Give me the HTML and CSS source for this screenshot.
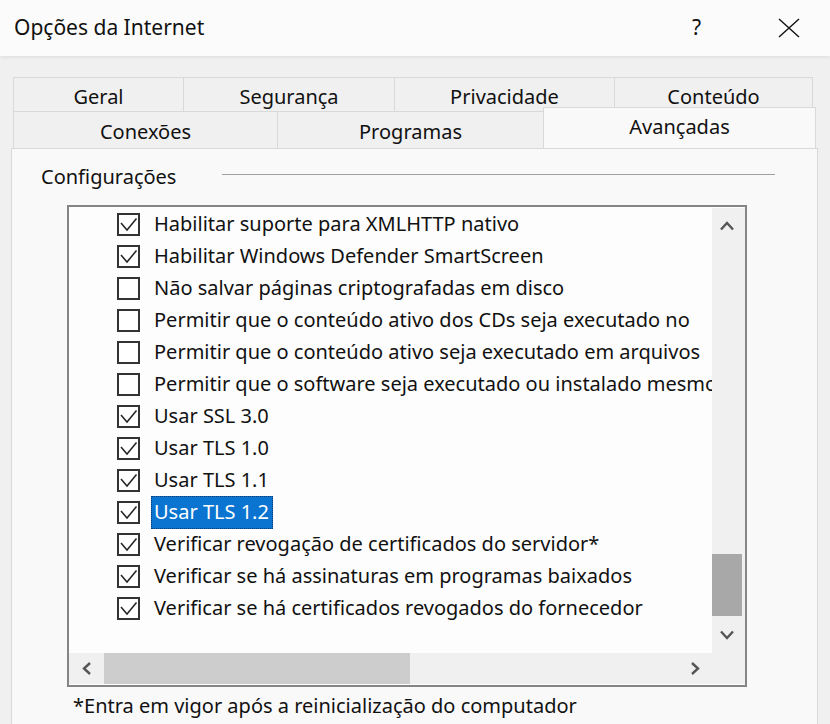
FILE: index.html
```html
<!DOCTYPE html>
<html lang="pt-BR">
<head>
<meta charset="utf-8">
<title>Opções da Internet</title>
<link rel="stylesheet" href="styles.css">
</head>
<body>
<div class="window">
  <div class="titlebar">
    <span class="title">Opções da Internet</span>
    <span class="help">?</span>
    <span class="close">
      <svg width="22" height="20" viewBox="0 0 22 20"><path d="M1 1 L21 19 M21 1 L1 19" stroke="#111" stroke-width="1.4" fill="none"/></svg>
    </span>
  </div>
  <div class="content">
    <div class="tabs">
      <div class="tabrow">
        <div class="tab w-geral">Geral</div>
        <div class="tab w-seg">Segurança</div>
        <div class="tab w-priv">Privacidade</div>
        <div class="tab w-cont">Conteúdo</div>
      </div>
      <div class="tabrow row2">
        <div class="tab w-con">Conexões</div>
        <div class="tab w-prog">Programas</div>
        <div class="tab active w-avan">Avançadas</div>
      </div>
    </div>
    <div class="panel">
      <div class="group-head">
        <span class="group-label">Configurações</span>
        <span class="rule"></span>
      </div>
      <div class="listbox">
        <div class="listmain">
          <div class="items">
            <div class="item"><span class="cb on"><svg viewBox="0 0 19 19"><path d="M2 8 L8 15 L17.5 3.5"/></svg></span><span class="label">Habilitar suporte para XMLHTTP nativo</span></div>
            <div class="item"><span class="cb on"><svg viewBox="0 0 19 19"><path d="M2 8 L8 15 L17.5 3.5"/></svg></span><span class="label">Habilitar Windows Defender SmartScreen</span></div>
            <div class="item"><span class="cb"></span><span class="label">Não salvar páginas criptografadas em disco</span></div>
            <div class="item"><span class="cb"></span><span class="label">Permitir que o conteúdo ativo dos CDs seja executado no</span></div>
            <div class="item"><span class="cb"></span><span class="label">Permitir que o conteúdo ativo seja executado em arquivos</span></div>
            <div class="item"><span class="cb"></span><span class="label">Permitir que o software seja executado ou instalado mesmo</span></div>
            <div class="item"><span class="cb on"><svg viewBox="0 0 19 19"><path d="M2 8 L8 15 L17.5 3.5"/></svg></span><span class="label">Usar SSL 3.0</span></div>
            <div class="item"><span class="cb on"><svg viewBox="0 0 19 19"><path d="M2 8 L8 15 L17.5 3.5"/></svg></span><span class="label">Usar TLS 1.0</span></div>
            <div class="item"><span class="cb on"><svg viewBox="0 0 19 19"><path d="M2 8 L8 15 L17.5 3.5"/></svg></span><span class="label">Usar TLS 1.1</span></div>
            <div class="item"><span class="cb on"><svg viewBox="0 0 19 19"><path d="M2 8 L8 15 L17.5 3.5"/></svg></span><span class="label selected">Usar TLS 1.2</span></div>
            <div class="item"><span class="cb on"><svg viewBox="0 0 19 19"><path d="M2 8 L8 15 L17.5 3.5"/></svg></span><span class="label">Verificar revogação de certificados do servidor*</span></div>
            <div class="item"><span class="cb on"><svg viewBox="0 0 19 19"><path d="M2 8 L8 15 L17.5 3.5"/></svg></span><span class="label">Verificar se há assinaturas em programas baixados</span></div>
            <div class="item"><span class="cb on"><svg viewBox="0 0 19 19"><path d="M2 8 L8 15 L17.5 3.5"/></svg></span><span class="label">Verificar se há certificados revogados do fornecedor</span></div>
          </div>
          <div class="vscroll">
            <div class="sbtn vbtn"><svg width="14" height="10" viewBox="0 0 14 10"><path d="M1 8.5 L7 2 L13 8.5"/></svg></div>
            <div class="vtrack"><div class="vthumb"></div></div>
            <div class="sbtn vbtn"><svg width="14" height="10" viewBox="0 0 14 10"><path d="M1 1.5 L7 8 L13 1.5"/></svg></div>
          </div>
        </div>
        <div class="hrow">
          <div class="hscroll">
            <div class="sbtn hbtn"><svg width="10" height="13" viewBox="0 0 10 13"><path d="M8 1 L2 6.5 L8 12"/></svg></div>
            <div class="htrack"><div class="hthumb"></div></div>
            <div class="sbtn hbtn"><svg width="10" height="13" viewBox="0 0 10 13"><path d="M2 1 L8 6.5 L2 12"/></svg></div>
          </div>
          <div class="corner"></div>
        </div>
      </div>
      <div class="note">*Entra em vigor após a reinicialização do computador</div>
    </div>
  </div>
</div>
</body>
</html>
```

FILE: styles.css
```css
html, body {
  margin: 0;
  padding: 0;
}
body {
  width: 830px;
  height: 724px;
  overflow: hidden;
  background: #f0f0f0;
  font-family: "Noto Sans", "Open Sans", sans-serif;
  color: #111;
}
.window {
  width: 830px;
  height: 724px;
  display: flex;
  flex-direction: column;
}
.titlebar {
  height: 56px;
  flex: none;
  background: #fbfbfb;
  display: flex;
  align-items: center;
  padding-left: 14px;
  box-shadow: 0 2px 3px rgba(0,0,0,0.06);
  position: relative;
  z-index: 1;
}
.title {
  font-size: 21px;
  flex: 1;
  padding-bottom: 2px;
}
.help {
  font-size: 21px;
  width: 12px;
  margin-right: 74px;
  padding-bottom: 2px;
}
.close {
  width: 22px;
  margin-right: 30px;
  display: flex;
}
.content {
  flex: 1;
  padding: 21px 0 0 11px;
  display: flex;
  flex-direction: column;
  min-height: 0;
}
.tabs {
  padding-left: 2px;
  font-size: 20px;
}
.tabrow {
  display: flex;
  height: 35px;
}
.tabrow.row2 {
  height: 36px;
}
.tab {
  box-sizing: border-box;
  height: 100%;
  border: 1px solid #d9d9d9;
  border-right: none;
  background: #f0f0f0;
  display: flex;
  align-items: center;
  justify-content: center;
  padding-top: 3px;
}
.tab:last-child {
  border-right: 1px solid #d9d9d9;
}
.row2 .tab {
  border-top: none;
  border-bottom: none;
}
.tab.active {
  background: #f9f9f9;
  border-top: 1px solid #d9d9d9;
  height: 41px;
  margin-top: -5px;
  padding-top: 0;
  padding-bottom: 3px;
  position: relative;
  z-index: 2;
}
.w-geral { width: 170px; }
.w-seg { width: 211px; }
.w-priv { width: 220px; }
.w-cont { width: 199px; }
.w-con { width: 264px; }
.w-prog { width: 266px; }
.w-avan { width: 273px; }

.panel {
  width: 807px;
  box-sizing: border-box;
  flex: 1;
  background: #f9f9f9;
  border: 1px solid #d9d9d9;
  border-bottom: none;
  font-size: 20px;
  position: relative;
  z-index: 1;
}
.group-head {
  height: 56px;
  display: flex;
  align-items: center;
  padding-left: 29px;
  padding-right: 42px;
}
.group-label {
  padding-bottom: 2px;
}
.rule {
  flex: 1;
  height: 1px;
  background: #a0a0a0;
  margin-left: 46px;
  margin-bottom: 5px;
}
.listbox {
  margin-left: 55px;
  width: 680px;
  height: 482px;
  box-sizing: border-box;
  border: 2px solid #858585;
  background: #fdfdfd;
  display: flex;
  flex-direction: column;
}
.listmain {
  display: flex;
  height: 446px;
}
.items {
  flex: 1;
  overflow: hidden;
  padding-top: 1px;
}
.item {
  height: 32px;
  display: flex;
  align-items: center;
  white-space: nowrap;
}
.cb {
  flex: none;
  width: 23px;
  height: 23px;
  box-sizing: border-box;
  border: 2px solid #333;
  background: #fff;
  margin-left: 48px;
  margin-right: 11px;
  display: flex;
}
.cb svg {
  width: 19px;
  height: 19px;
}
.cb svg path {
  fill: none;
  stroke: #222;
  stroke-width: 1.5;
}
.label {
  padding: 1px 3px 3px 2px;
  border: 1px dotted transparent;
  color: #111;
}
.label.selected {
  background: #0a74d0;
  color: #fff;
  border-color: #02396a;
}
.vscroll {
  width: 33px;
  display: flex;
  flex-direction: column;
  background: #f0f0f0;
  margin-top: 1px;
}
.sbtn {
  display: flex;
  align-items: center;
  justify-content: center;
  flex: none;
}
.sbtn path {
  fill: none;
  stroke: #555;
  stroke-width: 2.4;
}
.vbtn {
  height: 36px;
  width: 30px;
}
.vtrack {
  flex: 1;
}
.vthumb {
  margin-top: 310px;
  width: 30px;
  height: 62px;
  background: #a8a8a8;
}
.hrow {
  display: flex;
  height: 31px;
}
.hscroll {
  flex: 1;
  display: flex;
  background: #f0f0f0;
}
.hbtn {
  width: 35px;
}
.htrack {
  flex: 1;
  display: flex;
  align-items: stretch;
}
.hthumb {
  width: 306px;
  background: #cdcdcd;
}
.corner {
  width: 33px;
  background: #f0f0f0;
}
.note {
  margin-left: 61px;
  margin-top: 5px;
  line-height: 28px;
}
```
